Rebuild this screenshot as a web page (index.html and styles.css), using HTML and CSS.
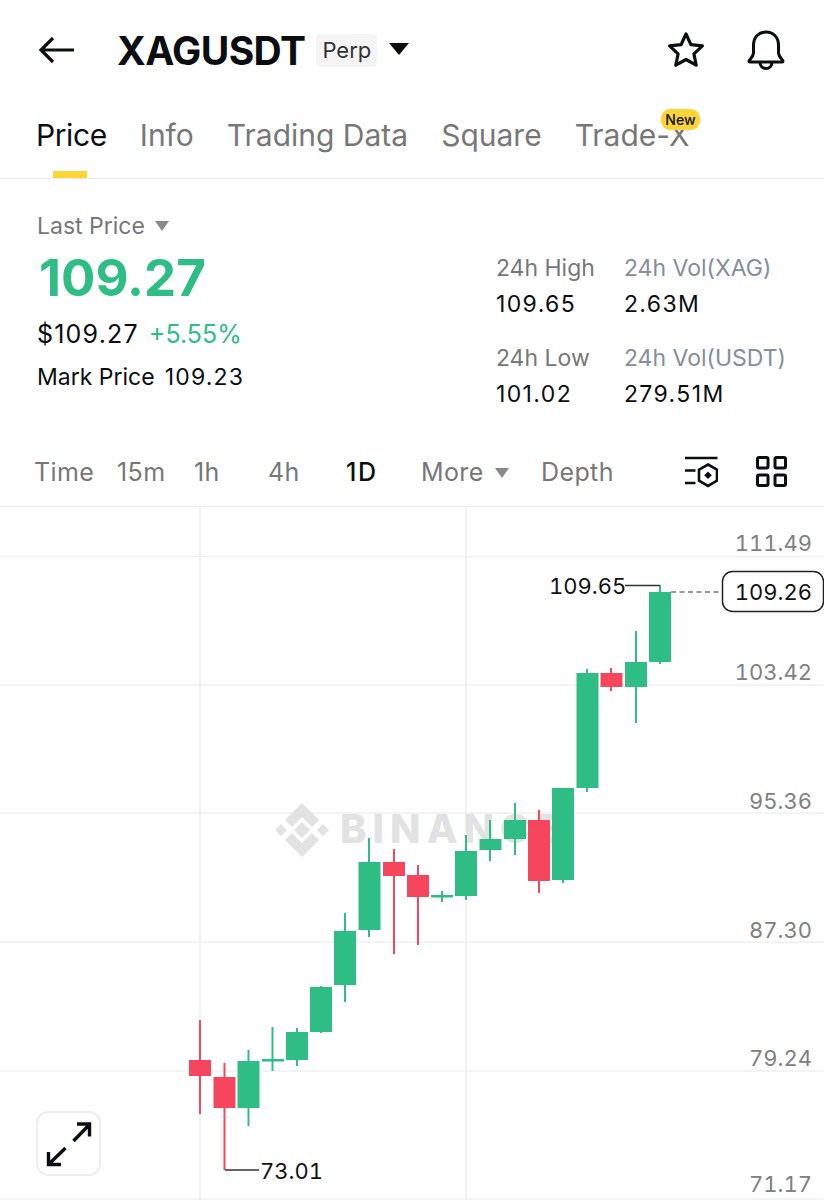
FILE: index.html
```html
<!DOCTYPE html>
<html>
	<head>
		<meta charset="utf-8">
		<title>XAGUSDT</title>
		<link rel="stylesheet" href="styles.css">
	</head>
	<body>
		<div class="header">
			<svg class="back" width="38" height="30" viewBox="0 0 38 30"><path d="M36 15H3M15 3L3 15l12 12" fill="none" stroke="#0b0e11" stroke-width="3.2"/></svg>
			<div class="title">XAGUSDT</div>
			<div class="badge">Perp</div>
			<div class="caret caret_black"></div>
			<svg class="star" width="40" height="40" viewBox="0 0 40 40"><path d="M20 4l4.9 10.600 11.500 1.300-8.500 7.900 2.300 11.400L20 29.500 9.800 35.200l2.300-11.400-8.500-7.900 11.500-1.300z" fill="none" stroke="#0b0e11" stroke-width="3.200" stroke-linejoin="round"/></svg>
			<svg class="bell" width="40" height="42" viewBox="0 0 40 42"><path d="M3 32c0-1.500 4-3 4.500-8V16C7.500 8 13 3 20 3s12.500 5 12.500 13v8c.5 5 4.500 6.500 4.500 8 0 .6-.4 1-1 1H4c-.6 0-1-.4-1-1zM14 33c0 4 2.500 6.500 6 6.500s6-2.500 6-6.500" fill="none" stroke="#0b0e11" stroke-width="3"/></svg>
		</div>

		<div class="tabs">
			<div class="tab tab_active">Price</div>
			<div class="tab">Info</div>
			<div class="tab">Trading Data</div>
			<div class="tab">Square</div>
			<div class="tab tab_new">Trade-X<span class="new">New</span></div>
		</div>

		<div class="stats">
			<div class="stats_left">
				<div class="last">Last Price <span class="caret caret_grey"></span></div>
				<div class="price">109.27</div>
				<div class="usd">$109.27<span class="green">+5.55%</span></div>
				<div class="mark">Mark Price<span class="mark_val">109.23</span></div>
			</div>
			<div class="stats_right">
				<div class="lbl">24h High</div>
				<div class="lbl lbl_blue">24h Vol(XAG)</div>
				<div class="val">109.65</div>
				<div class="val">2.63M</div>
				<div class="lbl lbl_low">24h Low</div>
				<div class="lbl lbl_blue lbl_low">24h Vol(USDT)</div>
				<div class="val val_low">101.02</div>
				<div class="val val_low">279.51M</div>
			</div>
		</div>

		<div class="times">
			<div>Time</div>
			<div>15m</div>
			<div>1h</div>
			<div>4h</div>
			<div class="time_active">1D</div>
			<div>More <span class="caret caret_grey"></span></div>
			<div>Depth</div>
			<div class="time_icons">
				<svg width="33" height="33" viewBox="0 0 33 33"><path d="M0 3h32.500M0 15.500h10.500M0 28h10.500" fill="none" stroke="#0b0e11" stroke-width="2.600"/><path d="M23 9.500l9 5.200v11l-9 5.200-9-5.200v-11z" fill="none" stroke="#0b0e11" stroke-width="2.600"/><path d="M23 16.500l3.800 3.800-3.800 3.800-3.800-3.800z" fill="#0b0e11"/></svg>
				<svg width="31" height="31" viewBox="0 0 31 31"><g fill="none" stroke="#0b0e11" stroke-width="3"><rect x="1.500" y="1.500" width="10.500" height="10.500" rx="1.500"/><rect x="19" y="1.500" width="10.500" height="10.500" rx="1.500"/><rect x="1.500" y="19" width="10.500" height="10.500" rx="1.500"/><rect x="19" y="19" width="10.500" height="10.500" rx="1.500"/></g></svg>
			</div>
		</div>

		<div class="chart">
			<!-- viewBox uses page coordinates, chart starts at y=507 -->
			<svg class="chart_svg" width="824" height="693" viewBox="0 507 824 693">
				<g stroke="#f0f0f0" stroke-width="1.500">
					<path d="M0 556.500H824M0 685H824M0 813H824M0 942H824M0 1071H824M0 1199H824M200 507V1200M466 507V1200"/>
				</g>

				<!-- watermark -->
				<g fill="#e2e2e2" transform="translate(302 830)">
					<path d="M0-8L8 0 0 8-8 0zM-21-6l6 6-6 6-6-6zM21-6l6 6-6 6-6-6z"/>
					<path d="M0-27l17 17-7 7L0-13-10-3l-7-7zM0 27l17-17-7-7L0 13-10 3l-7 7z"/>
				</g>
				<text class="watermark" x="340" y="843">BINANCE</text>

				<!-- up candles -->
				<g fill="#2ebd85">
					<rect x="247.500" y="1050" width="2" height="76"/><rect x="237.500" y="1061" width="22" height="47"/>
					<rect x="271.500" y="1027" width="2" height="44"/><rect x="262" y="1059" width="22" height="2.500"/>
					<rect x="296" y="1028" width="2" height="38"/><rect x="286" y="1032" width="22" height="28"/>
					<rect x="320" y="986" width="2" height="47"/><rect x="310" y="987" width="22" height="45"/>
					<rect x="344" y="913" width="2" height="89"/><rect x="334" y="931" width="22" height="54"/>
					<rect x="368" y="838" width="2" height="99"/><rect x="358.500" y="862" width="22" height="68"/>
					<rect x="441" y="891" width="2" height="11"/><rect x="431" y="895" width="22" height="2.500"/>
					<rect x="465" y="835" width="2" height="65"/><rect x="455" y="851" width="22" height="45"/>
					<rect x="489" y="820" width="2" height="41"/><rect x="479.500" y="839" width="22" height="11"/>
					<rect x="514" y="803" width="2" height="52"/><rect x="504" y="820" width="22" height="19"/>
					<rect x="562" y="788" width="2" height="95"/><rect x="552" y="788" width="22" height="92"/>
					<rect x="586" y="669" width="2" height="123"/><rect x="576.500" y="673" width="22" height="115"/>
					<rect x="635" y="631" width="2" height="92"/><rect x="625" y="662" width="22" height="25"/>
					<rect x="659" y="585" width="2" height="79"/><rect x="649" y="592" width="22" height="70"/>
				</g>

				<!-- down candles -->
				<g fill="#f6465d">
					<rect x="199" y="1020" width="2" height="94"/><rect x="189" y="1060" width="22" height="16"/>
					<rect x="223.500" y="1063" width="2" height="107"/><rect x="213.500" y="1077" width="22" height="31"/>
					<rect x="393" y="849" width="2" height="105"/><rect x="383" y="862" width="22" height="14"/>
					<rect x="417" y="865" width="2" height="80"/><rect x="407" y="875" width="22" height="22"/>
					<rect x="538" y="810" width="2" height="83"/><rect x="528" y="820" width="22" height="61"/>
					<rect x="610" y="668" width="2" height="23"/><rect x="600.500" y="673" width="22" height="14"/>
				</g>

				<!-- high / low marks -->
				<path d="M625 585.500H660M225 1170H259" fill="none" stroke="#333" stroke-width="1.500"/>
				<text class="mark_txt" x="549" y="594">109.65</text>
				<text class="mark_txt" x="260" y="1179">73.01</text>

				<!-- current price -->
				<path d="M671 592H722" fill="none" stroke="#333" stroke-width="1.200" stroke-dasharray="5 3.500"/>
				<rect x="722.500" y="571.500" width="101" height="40" rx="10" fill="#fff" stroke="#222" stroke-width="1.500"/>
				<text class="axis axis_now" x="812" y="600">109.26</text>

				<text class="axis" x="812" y="551">111.49</text>
				<text class="axis" x="812" y="680">103.42</text>
				<text class="axis" x="812" y="809">95.36</text>
				<text class="axis" x="812" y="938">87.30</text>
				<text class="axis" x="812" y="1066">79.24</text>
				<text class="axis" x="812" y="1192">71.17</text>
			</svg>

			<div class="expand">
				<svg width="46" height="46" viewBox="0 0 46 46"><path d="M27.500 20L43 4M31 3h12.500v12.500M19.500 27L3 43M15 43.500H2.500V31" fill="none" stroke="#0b0e11" stroke-width="3.400"/></svg>
			</div>
		</div>
	</body>
</html>
```

FILE: styles.css
```css
body {
	margin: 0;
	background-color: #fff;
	font-family: "Inter", "Liberation Sans", sans-serif;
	color: #0b0e11;
}

.header {
	display: flex;
	align-items: center;
	height: 100px;
	padding: 0 38px 0 38px;
}

.back {
	margin-right: 41px;
}

.title {
	font-size: 39px;
	font-weight: 700;
	letter-spacing: -0.6px;
}

.badge {
	margin-left: 11px;
	padding: 0 6px;
	height: 33px;
	line-height: 33px;
	font-size: 22px;
	background-color: #f5f5f5;
	border-radius: 4px;
	color: #333;
}

.caret {
	display: inline-block;
	width: 0;
	height: 0;
	border-style: solid;
	border-color: transparent;
	border-bottom-width: 0;
}

.caret_black {
	margin: 0 0 2px 12px;
	border-width: 12px 10.500px 0 10.500px;
	border-top-color: #0b0e11;
}

.caret_grey {
	margin-left: 4px;
	vertical-align: 3px;
	border-width: 10px 7.500px 0 7.500px;
	border-top-color: #8a8a8a;
}

.star {
	margin-left: auto;
}

.bell {
	margin-left: 40px;
}

.tabs {
	display: flex;
	gap: 33px;
	height: 79px;
	padding: 0 36px;
	box-sizing: border-box;
	border-bottom: 1.500px solid #eaeaea;
}

.tab {
	position: relative;
	font-size: 30px;
	line-height: 71px;
	color: #777;
}

.tab_active {
	letter-spacing: -0.4px;
	color: #0b0e11;
}

.tab_active::after {
	content: "";
	position: absolute;
	left: 17px;
	bottom: 0;
	width: 34px;
	height: 7px;
	background-color: #fcd535;
}

.new {
	position: absolute;
	right: -10px;
	top: 9px;
	height: 21px;
	line-height: 21px;
	padding: 0 4px;
	font-size: 14px;
	font-weight: 500;
	color: #0b0e11;
	background-color: #fcd535;
	border-radius: 9px;
}

.stats {
	display: flex;
	justify-content: space-between;
	height: 249px;
	padding: 0 37px;
}

.stats_left {
	padding-top: 32px;
}

.last {
	font-size: 23px;
	line-height: 30px;
	color: #777;
}

.price {
	margin: 7px 0 0 2px;
	font-size: 51px;
	font-weight: 700;
	line-height: 60px;
	color: #2ebd85;
}

.usd {
	margin-top: 10px;
	font-size: 25px;
	line-height: 32px;
	letter-spacing: 1.200px;
}

.green {
	margin-left: 10px;
	letter-spacing: 0;
	color: #2ebd85;
}

.mark {
	margin-top: 11px;
	font-size: 23px;
	line-height: 32px;
}

.mark_val {
	margin-left: 10px;
	letter-spacing: 1.200px;
}

.stats_right {
	display: grid;
	grid-template-columns: 128px auto;
	grid-template-rows: 36px 36px 18px 36px 36px;
	padding-top: 71px;
	margin-right: 1px;
}

.lbl {
	font-size: 23px;
	line-height: 36px;
	color: #777;
}

.lbl_blue {
	color: #848e9c;
}

.lbl_low {
	grid-row: 4;
}

.val {
	font-size: 23px;
	line-height: 36px;
	letter-spacing: 1.400px;
}

.val_low {
	grid-row: 5;
}

.times {
	display: grid;
	grid-template-columns: 83px 77px 74px 78px 75px 120px auto 1fr;
	align-items: center;
	height: 79px;
	padding: 9px 37px 0 34px;
	font-size: 25px;
	letter-spacing: 0.4px;
	color: #777;
	border-bottom: 1.500px solid #eaeaea;
	box-sizing: border-box;
}

.time_active {
	font-weight: 500;
	letter-spacing: 1.500px;
	color: #0b0e11;
}

.time_icons {
	display: flex;
	justify-content: flex-end;
	align-items: center;
	gap: 38px;
}

.time_icons svg {
	display: block;
}

.chart {
	position: relative;
	height: 693px;
	overflow: hidden;
}

.chart_svg {
	display: block;
}

.axis {
	font-size: 22px;
	font-variant-numeric: tabular-nums;
	text-anchor: end;
	fill: #808080;
}

.axis_now {
	fill: #111;
}

.mark_txt {
	font-size: 22px;
	font-variant-numeric: tabular-nums;
	fill: #111;
}

.watermark {
	font-size: 40px;
	font-weight: 800;
	letter-spacing: 6px;
	fill: #e2e2e2;
}

.expand {
	position: absolute;
	left: 36px;
	bottom: 24px;
	display: flex;
	align-items: center;
	justify-content: center;
	width: 65px;
	height: 65px;
	box-sizing: border-box;
	background-color: #fff;
	border: 2px solid #eee;
	border-radius: 12px;
}
```
